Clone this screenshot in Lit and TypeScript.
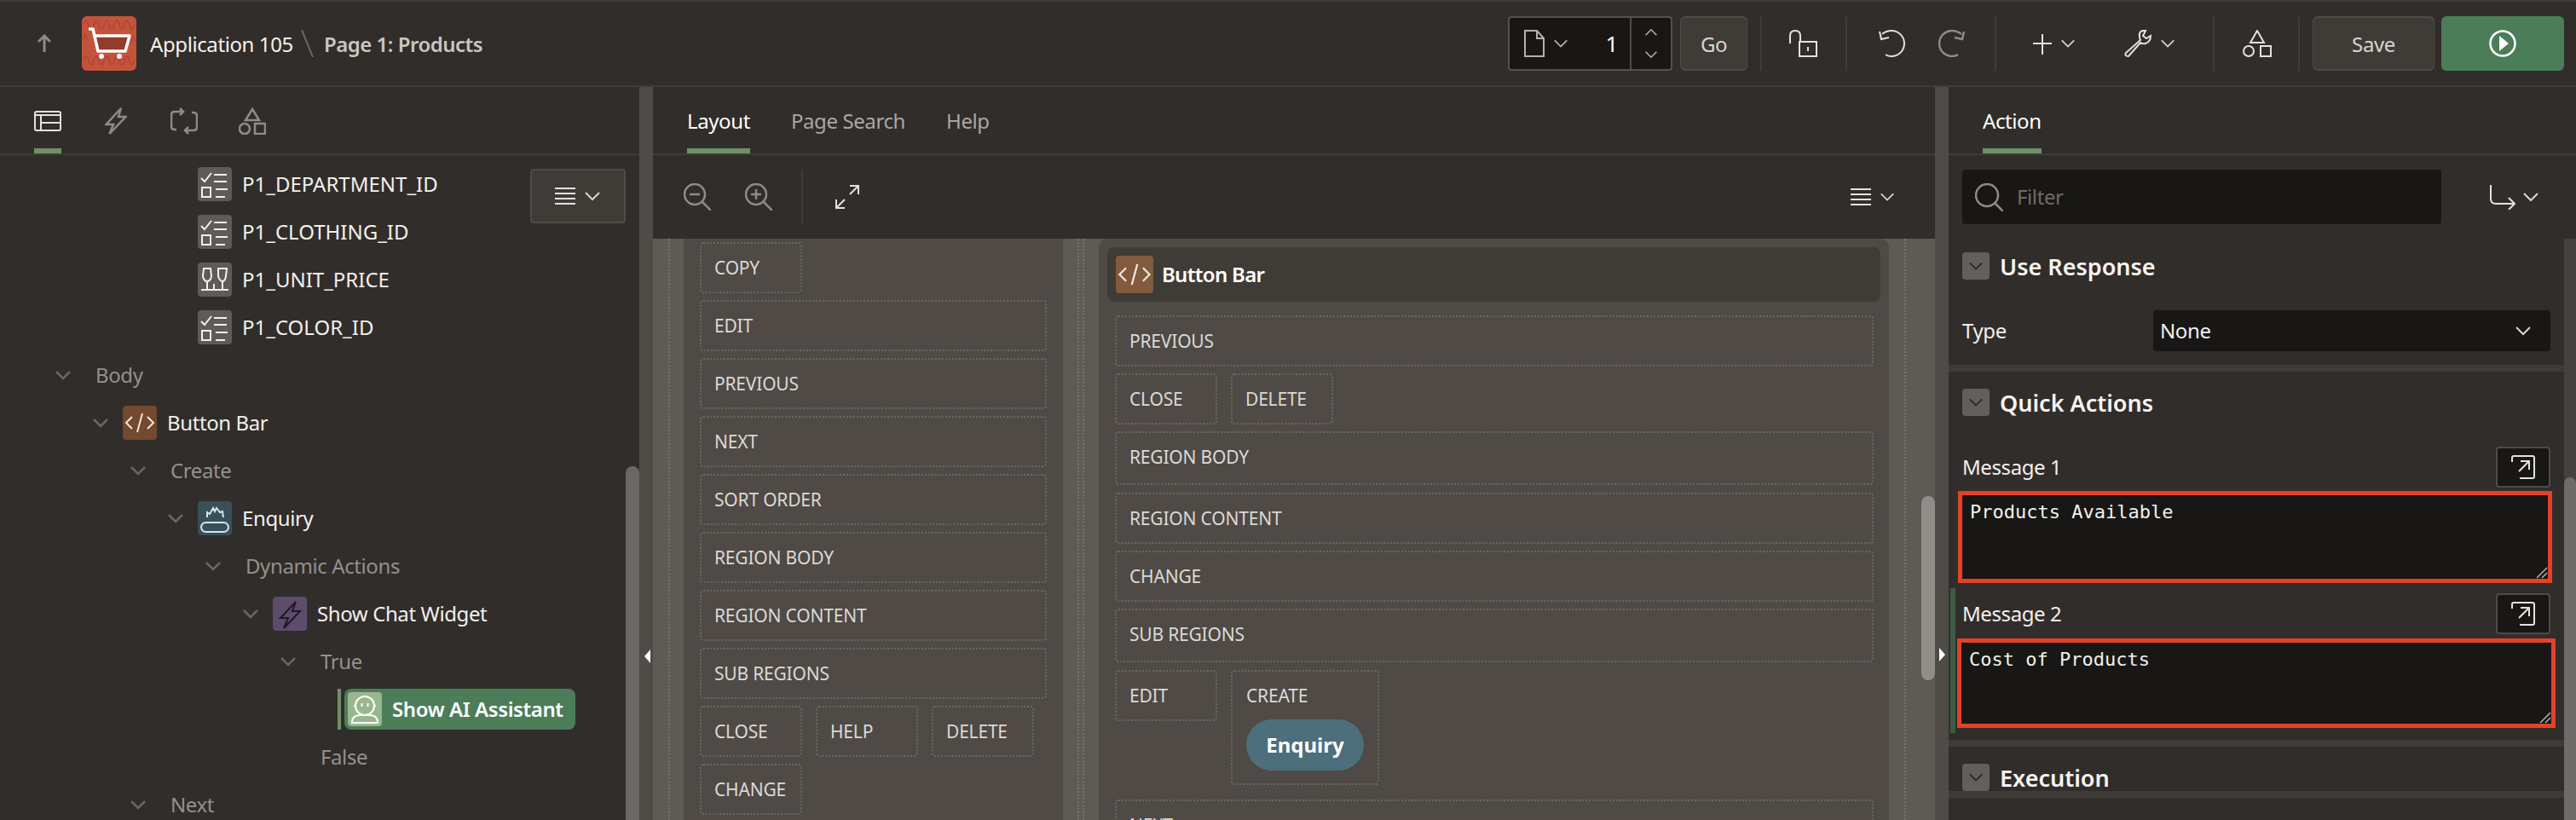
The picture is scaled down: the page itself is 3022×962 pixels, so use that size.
import { LitElement, html, css } from "lit";
import { customElement } from "lit/decorators.js";

const chev = (cls = "") => html`<svg class="chev ${cls}" viewBox="0 0 20 12"><polyline points="2,2 10,10 18,2"/></svg>`;
const checklist = html`<svg viewBox="0 0 40 40"><path d="M4 13l4 4 8-10M19 9h15M19 17h15M21 26h14M21 35h11"/><rect x="5" y="24" width="10" height="11"/></svg>`;
const glasses = html`<svg viewBox="0 0 40 40"><path d="M7 7h8l1 9q-1 6-5 6t-5-6zM24 7h10l-1 9q-1 6-4 6t-5-6zM11 22v9M29 22v9M4 32h32M19 25v7"/></svg>`;
const code = html`<svg viewBox="0 0 40 40"><path d="M11 13l-7 7 7 7M29 13l7 7-7 7M23 9l-6 22"/></svg>`;
const flame = html`<svg viewBox="0 0 40 40"><rect x="4" y="25" width="32" height="11" rx="5.5"/><path d="M11 19v-6l3 2 4-7 2 4 2-4 4 5 3-1 1 7"/></svg>`;
const bolt = html`<svg viewBox="0 0 40 40"><path d="M27 6L9 25h9l-5 12 19-20h-9z"/></svg>`;
const bot = html`<svg viewBox="0 0 40 40"><circle cx="20" cy="16" r="11"/><path d="M7 16h2M31 16h2M16.500 13v4M23.500 13v4M5 36q0-9 9-9h12q9 0 9 9z"/></svg>`;
const layoutIc = html`<svg class="i" width="32" height="24" viewBox="0 0 32 24"><rect x="1" y="1" width="30" height="22" rx="2"/><path d="M1 5h30M8 5v18M8 14h23"/></svg>`;
const boltIc = html`<svg class="i g" width="26" height="32" viewBox="0 0 26 32"><path d="M19 1L1.500 20H10L5.500 31 24.500 11H16z"/></svg>`;
const shareIc = html`<svg class="i g" width="32" height="32" viewBox="0 0 32 32"><path d="M13 5H5Q1 5 1 9v13q0 4 4 4h2M11 1l4 4-4 4M19 27h8q4 0 4-4V10q0-4-4-4h-2M21 31l-4-4 4-4"/></svg>`;
const shapesIc = html`<svg class="i g" width="32" height="32" viewBox="0 0 32 32"><path d="M16 2l8 13H8z"/><circle cx="7" cy="25" r="6"/><rect x="19" y="19" width="12" height="12"/></svg>`;
const burger = html`<svg class="i" width="24" height="22" viewBox="0 0 24 22"><path d="M0 2h24M0 8h24M0 14h24M0 20h24"/></svg>`;
const popup = html`<svg class="i" width="28" height="28" viewBox="0 0 28 28"><path d="M1 8V3q0-2 2-2h22q2 0 2 2v22q0 2-2 2H10M9 19L21 7M11 7h10v10"/></svg>`;
const grip = html`<svg class="grip" width="14" height="14" viewBox="0 0 14 14"><path d="M1 13L13 1M7 13l6-6"/></svg>`;

type Row = { l: number; t: string; ic?: string; svg?: unknown; dim?: boolean; noChev?: boolean };
const rows: Row[] = [
  { l: 196, t: "P1_DEPARTMENT_ID", ic: "grey", svg: checklist, noChev: true },
  { l: 196, t: "P1_CLOTHING_ID", ic: "grey", svg: checklist, noChev: true },
  { l: 196, t: "P1_UNIT_PRICE", ic: "grey", svg: glasses, noChev: true },
  { l: 196, t: "P1_COLOR_ID", ic: "grey", svg: checklist, noChev: true },
  { l: 64, t: "Body", dim: true },
  { l: 108, t: "Button Bar", ic: "brown", svg: code },
  { l: 152, t: "Create", dim: true },
  { l: 196, t: "Enquiry", ic: "teal", svg: flame },
  { l: 240, t: "Dynamic Actions", dim: true },
  { l: 284, t: "Show Chat Widget", ic: "purple", svg: bolt },
  { l: 328, t: "True", dim: true },
];

@customElement("app-root")
export class AppRoot extends LitElement {
  static styles = css`
    :host { display: block; width: 3022px; height: 962px; overflow: hidden; background: #312d2a; color: #fff; font-family: "Noto Sans", "Open Sans", sans-serif; font-size: 24px; letter-spacing: -0.4px; }
    * { box-sizing: border-box; }
    svg { display: block; flex: none; fill: none; stroke-width: 2; }
    .t { padding-bottom: 2px; }
    .i { stroke: #e4e2de; }
    .g { stroke: #8f8c88; stroke-width: 2.500; }
    .chev { width: 20px; height: 12px; stroke: #d8d5d0; stroke-width: 2; }
    .chev.dim { stroke: #6b6763; stroke-width: 2.500; }
    .top { height: 102px; border-top: 2px solid #3f3c38; border-bottom: 2px solid #3f3c38; display: flex; align-items: center; }
    .up { margin-left: 44px; width: 16px; stroke: #8f8c88; stroke-width: 3; }
    .logo { margin-left: 36px; width: 64px; height: 64px; }
    .app { margin-left: 16px; color: #f4f2ef; width: 166px; white-space: nowrap; }
    .slash { margin: 0 12px 0 11px; stroke: #6b6763; width: 15px; }
    .pg { font-weight: 600; letter-spacing: -0.5px; color: #c9c6c2; white-space: nowrap; }
    .spacer { flex: 1; }
    .pager { width: 193px; height: 64px; background: #181715; border: 2px solid #55514d; border-radius: 4px; display: flex; align-items: center; }
    .pager .pico { margin-left: 17px; stroke: #b5b2ae; }
    .pager .chev { margin-left: 10px; width: 18px; stroke: #b5b2ae; }
    .pager .num { flex: 1; text-align: right; padding-right: 14px; font-size: 26px; }
    .spin { width: 48px; height: 100%; border-left: 2px solid #4f4b47; display: flex; flex-direction: column; justify-content: space-between; align-items: center; padding: 12px 0; }
    .spin .chev { margin: 0; width: 16px; height: 10px; }
    .up-c { transform: rotate(180deg); }
    .btn { height: 64px; background: #3f3c38; border: 2px solid #4f4b47; border-left-width: 1px; border-right-width: 1px; border-radius: 6px; display: flex; align-items: center; justify-content: center; color: #d8d5d0; }
    .go { width: 79px; margin-left: 9px; }
    .save { width: 143px; }
    .run { width: 144px; margin-left: 8px; margin-right: 14px; height: 64px; background: #4b7d59; border-radius: 6px; display: flex; align-items: center; justify-content: center; }
    .sep { width: 2px; height: 64px; background: #3f3c38; }
    .tb { display: flex; align-items: center; }
    .tb .chev { width: 18px; margin-left: 10px; }

    .main { display: flex; height: 860px; }
    .split { width: 16px; background: #4f4b47; position: relative; flex: none; }
    .tri { position: absolute; width: 0; height: 0; border-top: 8px solid transparent; border-bottom: 8px solid transparent; }
    .tri.l { left: 6px; top: 660px; border-right: 7px solid #fff; }
    .tri.r { left: 5px; top: 658px; border-left: 7px solid #fff; }
    .tabs { height: 80px; border-bottom: 2px solid #3f3c38; display: flex; flex: none; }
    .tab { height: 78px; display: flex; align-items: center; justify-content: center; color: #aaa7a3; padding-top: 8px; border-bottom: 6px solid transparent; }
    .tab.on { color: #fff; border-bottom-color: #6f9168; }
    .mtabs .tab, .rtabs .tab { padding-top: 6px; }

    .left { width: 750px; flex: none; display: flex; flex-direction: column; position: relative; }
    .ltabs { padding-left: 40px; gap: 48px; }
    .ltabs .tab { width: 32px; }
    .tree { padding-top: 6px; flex: 1; overflow: hidden; }
    .row { height: 56px; display: flex; align-items: center; color: #f2f0ed; }
    .row.caps { letter-spacing: 0; }
    .row .slot { width: 36px; flex: none; }
    .row.dim { color: #94918c; }
    .row.dim .lbl { margin-left: 12px; }
    .box { width: 40px; height: 40px; border-radius: 4px; margin-right: 12px; flex: none; display: flex; }
    .box svg { width: 40px; height: 40px; }
    .grey { background: #5f5b57; stroke: #f2f0ed; }
    .brown { background: #73492f; stroke: #f4e6da; }
    .teal { background: #38505a; stroke: #d5e6ec; }
    .purple { background: #5d4c6c; stroke: #1f1a26; }
    .sage { background: #99b78f; stroke: #fff; }
    .selrow { height: 56px; display: flex; align-items: center; padding-left: 396px; }
    .selbar { width: 4px; height: 48px; background: #6f9168; margin-right: 4px; }
    .pill { width: 271px; height: 48px; background: #4b7d59; border-radius: 8px; display: flex; align-items: center; padding-left: 4px; font-weight: 600; white-space: nowrap; }
    .menu { position: absolute; left: 622px; top: 96px; width: 112px; height: 64px; background: #3f3c38; border: 2px solid #4f4b47; border-radius: 4px; display: flex; align-items: center; justify-content: center; gap: 10px; }
    .sb { position: absolute; width: 16px; background: #6b6763; border-radius: 8px 8px 0 0; }
    .sb.lft { left: 734px; top: 445px; height: 420px; }

    .mid { width: 1504px; flex: none; display: flex; flex-direction: column; position: relative; }
    .mtabs { padding-left: 40px; gap: 48px; }
    .mbar { height: 98px; flex: none; display: flex; align-items: center; padding-left: 36px; }
    .canvas { flex: 1; display: flex; background: #5e5a55; overflow: hidden; }
    .gut { flex: none; display: flex; }
    .dot { border-left: 2px dotted #76726d; height: 100%; }
    .g1 { width: 36px; padding-left: 18px; }
    .g2 { width: 42px; padding-left: 17px; gap: 4px; }
    .g3 { width: 54px; padding-left: 18px; }
    .col1 { width: 445px; flex: none; background: #4f4a46; padding: 4px 19px 0; display: flex; flex-wrap: wrap; gap: 8px 16px; align-content: flex-start; }
    .col2 { width: 927px; flex: none; background: #4f4a46; border-radius: 10px 10px 0 0; padding: 10px; }
    .bb { height: 64px; background: #3f3b36; border-radius: 8px; display: flex; align-items: center; padding-left: 10px; font-weight: 600; letter-spacing: -0.7px; margin-bottom: 16px; }
    .bb .box { width: 44px; height: 44px; background: #825a3e; margin-right: 10px; }
    .bb .box svg { width: 44px; height: 44px; }
    .flow { padding: 0 8px 0 9px; display: flex; flex-wrap: wrap; gap: 8px 16px; align-content: flex-start; align-items: flex-start; }
    .d { height: 60px; border: 2px dotted #6b6763; border-radius: 4px; display: flex; align-items: center; padding-left: 15px; width: 120px; font-size: 21px; letter-spacing: -0.2px; color: #dcd9d5; flex: none; }
    .d.w { width: 100%; }
    .d.t { height: 63px; margin-bottom: 1px; padding-bottom: 3px; }
    .create { width: 174px; height: 135px; display: block; padding: 0 0 0 16px; margin-bottom: 9px; }
    .create .cl { height: 56px; display: flex; align-items: center; }
    .enq { width: 138px; height: 60px; background: #4c6f7b; border-radius: 30px; display: flex; align-items: center; justify-content: center; font-weight: 700; color: #fff; font-size: 24px; letter-spacing: 0; padding-bottom: 2px; }
    .sb.mb { left: 1488px; top: 480px; width: 16px; height: 216px; background: #918d89; border-radius: 8px; }

    .right { flex: 1; display: flex; flex-direction: column; min-width: 0; }
    .rtabs { padding-left: 40px; }
    .rbar { height: 98px; flex: none; display: flex; align-items: center; padding-left: 16px; }
    .search { width: 562px; height: 64px; background: #181715; border-radius: 4px; display: flex; align-items: center; padding-left: 15px; color: #6f6b67; gap: 16px; }
    .jump { margin-left: 57px; display: flex; align-items: center; gap: 8px; }
    .rbody { flex: 1; display: flex; min-height: 0; position: relative; }
    .props { width: 722px; flex: none; overflow: hidden; }
    .rtrack { width: 14px; flex: none; background: #45413d; position: relative; }
    .rthumb { position: absolute; left: 0; top: 280px; width: 14px; bottom: 0; background: #6f6b67; border-radius: 7px 7px 0 0; }
    .sec { border-bottom: 8px solid #3f3b37; padding: 20px 16px 0; }
    .sec.first { padding-top: 16px; height: 156px; }
    .sec.q { height: 440px; padding-right: 16px; }
    .sh { display: flex; align-items: center; gap: 12px; font-size: 27px; letter-spacing: 0; font-weight: 600; height: 32px; color: #f6f4f1; }
    .tog { width: 32px; height: 32px; background: #635f5a; border-radius: 4px; display: flex; align-items: center; justify-content: center; }
    .tog .chev { stroke: #2a2724; width: 18px; }
    .trow { display: flex; align-items: center; justify-content: space-between; margin-top: 36px; color: #f2f0ed; }
    .sel { width: 466px; height: 48px; background: #181715; border-radius: 4px; display: flex; align-items: center; justify-content: space-between; padding: 0 22px 0 8px; }
    .ml { display: flex; align-items: center; justify-content: space-between; height: 48px; color: #f2f0ed; }
    .pop { width: 64px; height: 48px; background: #181715; border: 2px solid #4f4b47; border-radius: 4px; display: flex; align-items: center; justify-content: center; }
    .f1 { margin-top: 36px; margin-bottom: 6px; }
    .ta { position: relative; background: #181715; border: 5px solid #e3412a; font-family: "DejaVu Sans Mono", "Liberation Mono", monospace; font-size: 22px; letter-spacing: 0; color: #f2f0ed; padding: 7px 9px; line-height: 26px; }
    .ta.a { height: 108px; margin: 4px -2px 0 -5px; }
    .ta.b { height: 105px; margin: 5px -6px 0 -6px; }
    .f2 { margin-left: -14px; border-left: 6px solid #3f5a43; padding: 6px 0 6px 8px; height: 170px; }
    .grip { position: absolute; right: 0; bottom: 0; stroke: #b5b2ae; stroke-width: 1.500; }
  `;

  render() {
    return html`
      <div class="top">
        <svg class="up" width="16" height="22" viewBox="0 0 16 22"><path d="M8 21V2M1 9l7-7 7 7"/></svg>
        <svg class="logo" viewBox="0 0 64 64">
          <rect width="64" height="64" rx="6" fill="#c4533e"/>
          <path d="M2 10q3-10 6 0t6 0 6 0 6 0 6 0 6 0 6 0 6 0 6 0 6 0M2 52q3-10 6 0t6 0 6 0 6 0 6 0 6 0 6 0 6 0 6 0 6 0M2 28q2-14 4 0M58 30q2-14 4 0" stroke="#b04531" stroke-width="1.500"/>
          <path d="M15 23h41l-5 18H20z" fill="#933b2c"/>
          <path d="M8 15h5l6 26h32l5-18H15" stroke="#fff" stroke-width="3.500" stroke-linejoin="round"/>
          <circle cx="23" cy="47" r="3" fill="#fff"/><circle cx="44" cy="47" r="3" fill="#fff"/>
        </svg>
        <div class="app">Application 105</div>
        <svg class="slash" height="32" viewBox="0 0 15 32"><path d="M1 0l13 32"/></svg>
        <div class="pg">Page 1: Products</div>
        <div class="spacer"></div>
        <div class="pager">
          <svg class="pico" width="24" height="32" viewBox="0 0 24 32"><path d="M1 1h14l8 9v21H1zM15 1v9h8"/></svg>
          ${chev()}
          <div class="num">1</div>
          <div class="spin">${chev("up-c")}${chev()}</div>
        </div>
        <div class="btn go">Go</div>
        <div class="sep" style="margin-left:15px"></div>
        <svg class="i" style="margin-left:31px" width="34" height="32" viewBox="0 0 34 32"><path d="M2 16V7q0-6 6-6t6 6v6M13 14h20v17H13zM23 20v5"/></svg>
        <div class="sep" style="margin-left:33px"></div>
        <svg class="i" style="margin-left:36px" width="32" height="32" viewBox="0 0 32 32"><path d="M5 5q5-4 11-4a15 15 0 1 1 0 30q-4 0-7-2M2 2l2 9 9-2"/></svg>
        <svg class="i g" style="margin-left:39px" width="32" height="32" viewBox="0 0 32 32"><path d="M27 5q-5-4-11-4a15 15 0 1 0 0 30q4 0 7-2M30 2l-2 9-9-2"/></svg>
        <div class="sep" style="margin-left:34px"></div>
        <div class="tb" style="margin-left:43px"><svg class="i" width="22" height="32" viewBox="0 0 22 32"><path d="M11 5v24M0 16h22"/></svg>${chev()}</div>
        <div class="tb" style="margin-left:56px"><svg class="i" width="33" height="32" viewBox="0 0 33 32"><path d="M26 1q-8-1-7 7 0 3 1 4L3 27q-2 4 3 4l14-16q3 2 6 1 6-2 6-9l-5 3-4-3 3-6z"/></svg>${chev()}</div>
        <div class="sep" style="margin-left:44px"></div>
        <svg class="i" style="margin-left:33px" width="34" height="32" viewBox="0 0 34 32"><path d="M17 1l8 14H9z"/><circle cx="7" cy="25" r="6"/><rect x="21" y="19" width="12" height="12"/></svg>
        <div class="sep" style="margin-left:31px"></div>
        <div class="btn save" style="margin-left:15px">Save</div>
        <div class="run"><svg width="32" height="32" viewBox="0 0 32 32"><circle cx="16" cy="16" r="14.500" stroke="#fff" stroke-width="2.500"/><path d="M12 7l11 9-11 9z" fill="#fff"/></svg></div>
      </div>
      <div class="main">
        <div class="left">
          <div class="tabs ltabs">
            <div class="tab on">${layoutIc}</div>
            <div class="tab">${boltIc}</div>
            <div class="tab">${shareIc}</div>
            <div class="tab">${shapesIc}</div>
          </div>
          <div class="tree">
            ${rows.map(r => html`
              <div class="row ${r.dim ? "dim" : ""} ${r.noChev ? "caps" : ""}" style="padding-left:${r.l}px">
                <div class="slot">${r.noChev ? "" : chev("dim")}</div>
                ${r.ic ? html`<div class="box ${r.ic}">${r.svg}</div>` : ""}
                <div class="lbl t">${r.t}</div>
              </div>`)}
            <div class="selrow"><div class="selbar"></div><div class="pill"><div class="box sage">${bot}</div><span class="t">Show AI Assistant</span></div></div>
            <div class="row dim" style="padding-left:328px"><div class="slot"></div><div class="lbl t">False</div></div>
            <div class="row dim" style="padding-left:152px"><div class="slot">${chev("dim")}</div><div class="lbl t">Next</div></div>
          </div>
          <div class="menu">${burger}${chev()}</div>
          <div class="sb lft"></div>
        </div>
        <div class="split"><div class="tri l"></div></div>
        <div class="mid">
          <div class="tabs mtabs">
            <div class="tab on">Layout</div>
            <div class="tab">Page Search</div>
            <div class="tab">Help</div>
          </div>
          <div class="mbar">
            <svg class="i g" width="32" height="32" viewBox="0 0 32 32"><circle cx="13" cy="13" r="12"/><path d="M22 22l10 10M7 13h12"/></svg>
            <svg class="i g" style="margin-left:40px" width="32" height="32" viewBox="0 0 32 32"><circle cx="13" cy="13" r="12"/><path d="M22 22l10 10M7 13h12M13 7v12"/></svg>
            <div class="sep" style="margin-left:34px"></div>
            <svg class="i" style="margin-left:38px" width="28" height="28" viewBox="0 0 28 28"><path d="M17 11L27 1M17 1h10v10M1 27l10-10M1 17v10h10"/></svg>
            <div class="spacer"></div>
            ${burger}
            <div class="tb" style="margin-right:47px">${chev()}</div>
          </div>
          <div class="canvas">
            <div class="gut g1"><div class="dot"></div></div>
            <div class="col1">
              <div class="d">COPY</div>
              ${["EDIT","PREVIOUS","NEXT","SORT ORDER","REGION BODY","REGION CONTENT","SUB REGIONS"].map(t => html`<div class="d w">${t}</div>`)}
              <div class="d">CLOSE</div><div class="d">HELP</div><div class="d">DELETE</div>
              <div class="d">CHANGE</div>
            </div>
            <div class="gut g2"><div class="dot"></div><div class="dot"></div></div>
            <div class="col2">
              <div class="bb"><div class="box brown">${code}</div><span class="t">Button Bar</span></div>
              <div class="flow">
                <div class="d w">PREVIOUS</div>
                <div class="d">CLOSE</div><div class="d">DELETE</div>
                <div class="d w t">REGION BODY</div>
                <div class="d w">REGION CONTENT</div>
                <div class="d w">CHANGE</div>
                <div class="d w t">SUB REGIONS</div>
                <div class="d">EDIT</div>
                <div class="d create"><div class="cl">CREATE</div><div class="enq">Enquiry</div></div>
                <div class="d w">NEXT</div>
              </div>
            </div>
            <div class="gut g3"><div class="dot"></div></div>
          </div>
          <div class="sb mb"></div>
        </div>
        <div class="split"><div class="tri r"></div></div>
        <div class="right">
          <div class="tabs rtabs"><div class="tab on">Action</div></div>
          <div class="rbar">
            <div class="search">
              <svg class="i g" width="33" height="33" viewBox="0 0 33 33"><circle cx="14" cy="14" r="13"/><path d="M23 23l10 10"/></svg>
              <span class="t">Filter</span>
            </div>
            <div class="jump">
              <svg class="i" width="30" height="30" viewBox="0 0 30 30"><path d="M1 1v16q0 6 6 6h22M22 16l7 7-7 7"/></svg>
              ${chev()}
            </div>
          </div>
          <div class="rbody">
            <div class="props">
              <div class="sec first">
                <div class="sh"><div class="tog">${chev()}</div>Use Response</div>
                <div class="trow"><span class="t">Type</span><div class="sel"><span class="t">None</span>${chev()}</div></div>
              </div>
              <div class="sec q">
                <div class="sh"><div class="tog">${chev()}</div>Quick Actions</div>
                <div class="f1">
                  <div class="ml"><span class="t">Message 1</span><div class="pop">${popup}</div></div>
                  <div class="ta a">Products Available${grip}</div>
                </div>
                <div class="f2">
                  <div class="ml"><span class="t">Message 2</span><div class="pop">${popup}</div></div>
                  <div class="ta b">Cost of Products${grip}</div>
                </div>
              </div>
              <div class="sec">
                <div class="sh"><div class="tog">${chev()}</div>Execution</div>
              </div>
            </div>
            <div class="rtrack"><div class="rthumb"></div></div>
          </div>
        </div>
      </div>
    `;
  }
}
